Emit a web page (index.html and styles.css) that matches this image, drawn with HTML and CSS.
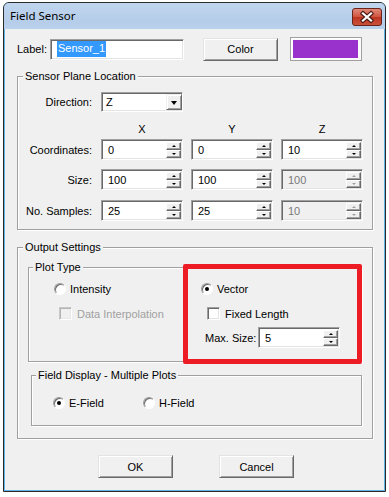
FILE: index.html
```html
<!DOCTYPE html>
<html>
<head>
<meta charset="utf-8">
<title>Field Sensor</title>
<link rel="stylesheet" href="styles.css">
</head>
<body>
<div class="window">
  <div class="titlebar">
    <span class="title">Field Sensor</span>
    <div class="close">
      <svg class="close-x" width="28" height="16" viewBox="0 0 28 16">
        <path d="M10 4.5 L18 11.5 M18 4.5 L10 11.5" fill="none" stroke="#4a1a14" stroke-width="4.4" stroke-linecap="square"/>
        <path d="M10 4.5 L18 11.5 M18 4.5 L10 11.5" fill="none" stroke="#ffffff" stroke-width="2.2" stroke-linecap="square"/>
      </svg>
    </div>
  </div>
  <div class="client">
    <div class="top-row">
      <span class="top-label">Label:</span>
      <div class="edit name-edit"><span class="selected">Sensor_1</span></div>
      <div class="btn color-btn">Color</div>
      <div class="swatch"><div class="swatch-fill"></div></div>
    </div>

    <div class="group plane">
      <div class="gtitle">Sensor Plane Location</div>
      <div class="frow dir-row">
        <span class="flabel">Direction:</span>
        <div class="edit combo"><span class="val">Z</span><div class="drop"><i class="tri-down"></i></div></div>
      </div>
      <div class="frow head-row">
        <span></span><span class="colhead">X</span><span class="colhead">Y</span><span class="colhead">Z</span>
      </div>
      <div class="frow coord-row">
        <span class="flabel">Coordinates:</span>
        <div class="edit spinbox"><span class="val">0</span><div class="spin"><span class="sb up"></span><span class="sb down"></span></div></div>
        <div class="edit spinbox"><span class="val">0</span><div class="spin"><span class="sb up"></span><span class="sb down"></span></div></div>
        <div class="edit spinbox"><span class="val">10</span><div class="spin"><span class="sb up"></span><span class="sb down"></span></div></div>
      </div>
      <div class="frow size-row">
        <span class="flabel">Size:</span>
        <div class="edit spinbox"><span class="val">100</span><div class="spin"><span class="sb up"></span><span class="sb down"></span></div></div>
        <div class="edit spinbox"><span class="val">100</span><div class="spin"><span class="sb up"></span><span class="sb down"></span></div></div>
        <div class="edit spinbox disabled"><span class="val">100</span><div class="spin"><span class="sb up"></span><span class="sb down"></span></div></div>
      </div>
      <div class="frow samples-row">
        <span class="flabel">No. Samples:</span>
        <div class="edit spinbox"><span class="val">25</span><div class="spin"><span class="sb up"></span><span class="sb down"></span></div></div>
        <div class="edit spinbox"><span class="val">25</span><div class="spin"><span class="sb up"></span><span class="sb down"></span></div></div>
        <div class="edit spinbox disabled"><span class="val">10</span><div class="spin"><span class="sb up"></span><span class="sb down"></span></div></div>
      </div>
    </div>

    <div class="group output">
      <div class="gtitle">Output Settings</div>
      <div class="group plot">
        <div class="gtitle">Plot Type</div>
        <div class="plot-cols">
          <div class="plot-left">
            <div class="opt radio-row"><span class="radio"></span><span>Intensity</span></div>
            <div class="opt check-row disabled-opt"><span class="check disabled"></span><span>Data Interpolation</span></div>
          </div>
          <div class="plot-right">
            <div class="opt radio-row"><span class="radio on"></span><span>Vector</span></div>
            <div class="opt check-row fixed"><span class="check"></span><span>Fixed Length</span></div>
            <div class="opt max-row"><span class="max-label">Max. Size:</span>
              <div class="edit spinbox"><span class="val">5</span><div class="spin"><span class="sb up"></span><span class="sb down"></span></div></div>
            </div>
          </div>
        </div>
      </div>
      <div class="group display">
        <div class="gtitle">Field Display - Multiple Plots</div>
        <div class="display-row">
          <div class="opt e-opt"><span class="radio on"></span><span>E-Field</span></div>
          <div class="opt"><span class="radio"></span><span>H-Field</span></div>
        </div>
      </div>
    </div>

    <div class="bottom-buttons">
      <div class="btn">OK</div>
      <div class="btn cancel">Cancel</div>
    </div>
  </div>
  <div class="annot"></div>
</div>
</body>
</html>
```

FILE: styles.css
```css
* { box-sizing: border-box; }
html, body { margin: 0; padding: 0; background: #fff; }
body {
  font-family: "Liberation Sans", Arial, sans-serif;
  font-size: 11px;
  color: #000;
}

.window {
  position: relative;
  margin: 2px 0 0 3px;
  width: 383px;
  height: 490px;
  border: 1px solid #2b2b2b;
  border-radius: 6px 6px 0 0;
  background: #62b3e6;
  display: flex;
  flex-direction: column;
}

.titlebar {
  height: 26px;
  flex: none;
  background: linear-gradient(#c0d5ee, #b5cde9 70%, #bad1ec);
  border-radius: 5px 5px 0 0;
  display: flex;
  align-items: flex-start;
  justify-content: space-between;
  padding: 0 3px 0 6px;
}
.title {
  font-family: "Noto Sans", "Open Sans", sans-serif;
  font-size: 11.5px;
  line-height: 26px;
  color: #000;
}
.close {
  flex: none;
  margin-top: 5px;
  width: 30px;
  height: 18px;
  border: 1px solid #6b2419;
  border-radius: 3px;
  background-color: #c94a36;
  background-image: linear-gradient(#e08a7b, #d0553f 48%, #bd3521 52%, #c9503a);
  display: flex;
  align-items: center;
  justify-content: center;
}
.close-x { display: block; }

.client {
  flex: 1;
  margin: 0 1px 1px 1px;
  background: #f0f0f0;
  display: flex;
  flex-direction: column;
}

/* top row */
.top-row {
  display: flex;
  align-items: center;
  height: 24px;
  margin-top: 8px;
  padding-left: 12px;
}
.top-label { width: 33px; }
.name-edit { width: 134px; padding-left: 3px; }
.selected {
  background: #3399ff;
  color: #fff;
  padding: 1px 1px 2px;
  line-height: 13px;
}
.color-btn { margin-left: 19px; height: 24px; }
.swatch {
  margin-left: 12px;
  width: 72px;
  height: 24px;
  border: 1px solid #a0a0a0;
  background: #fbfbfb;
  box-shadow: inset 1px 1px #fff;
  padding: 2px 3px 2px 2px;
}
.swatch-fill { width: 100%; height: 100%; background: #9932cc; }

/* controls */
.edit {
  height: 21px;
  background: #fff;
  border: 1px solid;
  border-color: #a0a0a0 #fff #fff #a0a0a0;
  box-shadow: inset 1px 1px #696969, inset -1px -1px #e3e3e3;
  display: flex;
  align-items: center;
  padding-left: 6px;
}
.edit.disabled { background: #f0f0f0; color: #7a7a7a; }
.spin {
  margin-left: auto;
  margin-right: 1px;
  width: 15px;
  height: 16px;
  display: flex;
  flex-direction: column;
}
.sb {
  flex: 1;
  background: #f0f0f0;
  border: 1px solid;
  border-color: #fff #696969 #696969 #fff;
  box-shadow: inset -1px -1px #a0a0a0;
  display: flex;
  align-items: center;
  justify-content: center;
}
.sb::after {
  content: "";
  width: 0;
  height: 0;
  border-style: solid;
  border-color: transparent;
}
.sb.up::after { border-width: 0 2px 2px; border-bottom-color: #000; }
.sb.down::after { border-width: 2px 2px 0; border-top-color: #000; }
.disabled .sb.up::after { border-bottom-color: #a0a0a0; }
.disabled .sb.down::after { border-top-color: #a0a0a0; }

.combo { height: 20px; padding-left: 4px; }
.drop {
  margin-left: auto;
  margin-right: 0;
  width: 16px;
  height: 16px;
  background: #f0f0f0;
  border: 1px solid;
  border-color: #f0f0f0 #696969 #696969 #f0f0f0;
  box-shadow: inset 1px 1px #fff, inset -1px -1px #a0a0a0;
  display: flex;
  align-items: center;
  justify-content: center;
}
.tri-down {
  width: 0; height: 0;
  border-style: solid;
  border-width: 4px 3.5px 0;
  border-color: #000 transparent transparent;
  margin-top: 1px;
}

.btn {
  width: 75px;
  height: 23px;
  background: #f0f0f0;
  border: 1px solid;
  border-color: #e3e3e3 #696969 #696969 #e3e3e3;
  box-shadow: inset 1px 1px #fff, inset -1px -1px #a0a0a0;
  display: flex;
  align-items: center;
  justify-content: center;
}

/* group boxes */
.group {
  border: 1px solid #a0a0a0;
  box-shadow: inset 1px 1px #fff, 1px 1px #fff;
  display: flex;
  flex-direction: column;
}
.gtitle {
  align-self: flex-start;
  margin: -7px 0 0 5px;
  padding: 0 2px;
  height: 13px;
  line-height: 13px;
  background: #f0f0f0;
}
.plot .gtitle, .display .gtitle { margin-left: 4px; }

.plane {
  margin: 15px 11px 0 12px;
  padding-bottom: 8px;
}
.frow {
  display: grid;
  grid-template-columns: 75px 82px 82px 82px;
  column-gap: 8px;
  align-items: center;
}
.flabel { text-align: right; padding-right: 1px; }
.colhead { text-align: center; line-height: 13px; }
.dir-row { margin-top: 9px; }
.head-row { margin-top: 11px; height: 13px; }
.coord-row { margin-top: 3px; }
.size-row { margin-top: 9px; }
.samples-row { margin-top: 10px; }

.output {
  margin: 17px 11px 0 12px;
  padding-bottom: 12px;
}
.plot {
  margin: 13px 0 0 10px;
  width: 334px;
  padding-bottom: 13px;
}
.plot-cols { display: flex; margin-top: 9px; }
.plot-left { width: 172px; padding-left: 25px; }
.plot-right { flex: 1; }

.opt { display: flex; align-items: center; white-space: nowrap; }
.radio-row { height: 12px; }
.check-row { height: 13px; margin-top: 12px; }
.plot-left .check-row { padding-left: 5px; }
.fixed { padding-left: 6px; }
.max-row { margin-top: 7px; padding-left: 4px; }
.max-label { width: 53px; }
.max-row .edit { width: 82px; }
.disabled-opt { color: #a0a0a0; }

.radio {
  flex: none;
  width: 12px;
  height: 12px;
  border-radius: 50%;
  border: 1px solid;
  border-color: #9a9a9a #fff #fff #9a9a9a;
  box-shadow: inset 1px 1px #6a6a6a;
  background: #fff;
  margin-right: 4px;
  display: flex;
  align-items: center;
  justify-content: center;
}
.radio.on::after {
  content: "";
  width: 4px;
  height: 4px;
  border-radius: 50%;
  background: #000;
}
.check {
  flex: none;
  width: 13px;
  height: 13px;
  border: 1px solid;
  border-color: #a0a0a0 #fff #fff #a0a0a0;
  box-shadow: inset 1px 1px #696969, inset -1px -1px #e3e3e3;
  background: #fff;
  margin-right: 5px;
}
.check.disabled {
  background: #f0f0f0;
  border-color: #c8c8c8 #fff #fff #c8c8c8;
  box-shadow: inset 1px 1px #b4b4b4, inset -1px -1px #e8e8e8;
}

.display {
  margin: 13px 0 0 13px;
  width: 331px;
  padding-bottom: 16px;
}
.display-row {
  display: flex;
  margin-top: 15px;
  padding-left: 21px;
  height: 12px;
  align-items: center;
}
.e-opt { width: 90px; }

.bottom-buttons {
  display: flex;
  margin-top: 16px;
  padding-left: 93px;
  gap: 46px;
}

.annot {
  position: absolute;
  left: 179px;
  top: 261px;
  width: 179px;
  height: 100px;
  border: 5px solid #ed1c24;
  border-radius: 2px;
}
```
